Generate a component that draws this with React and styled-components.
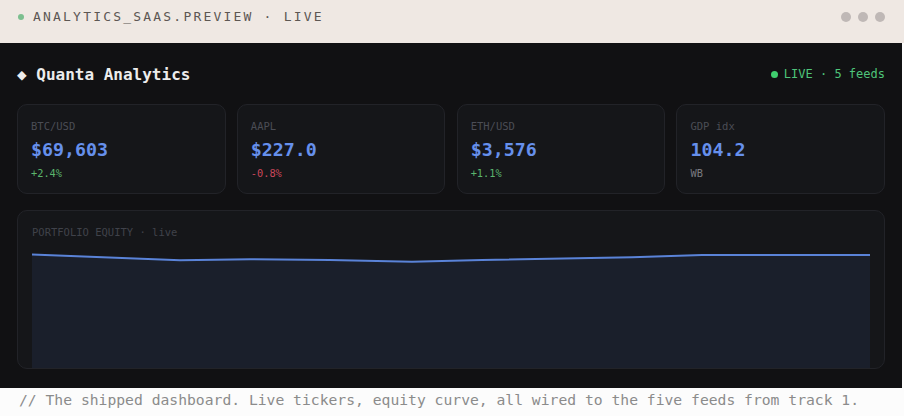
import React from "react";
import styled, { createGlobalStyle } from "styled-components";

const mono = `"DejaVu Sans Mono", "Liberation Mono", monospace`;

const Global = createGlobalStyle`
  html, body { margin: 0; padding: 0; background: #ffffff; }
  body { font-family: ${mono}; width: 904px; height: 416px; overflow: hidden; }
  * { box-sizing: border-box; }
`;

const Frame = styled.div`
  display: flex;
  flex-direction: column;
  width: 904px;
`;

const TitleBar = styled.div`
  display: flex;
  align-items: center;
  justify-content: space-between;
  height: 43px;
  padding: 0 19px 9px 18px;
  background: #efe8e3;
`;

const TitleLeft = styled.div`
  display: flex;
  align-items: center;
  gap: 9px;
`;

const Dot = styled.span`
  width: ${(p) => p.$size}px;
  height: ${(p) => p.$size}px;
  border-radius: 50%;
  background: ${(p) => p.$color};
  flex: none;
`;

const BarLabel = styled.span`
  font-size: 13px;
  letter-spacing: 2.2px;
  color: #5d5753;
  line-height: 18px;
`;

const WindowDots = styled.div`
  display: flex;
  gap: 6.5px;
`;

const Panel = styled.div`
  width: 902px;
  height: 345px;
  background: #111113;
  padding: 20px 17px 19px;
  display: flex;
  flex-direction: column;
`;

const Header = styled.div`
  display: flex;
  align-items: center;
  justify-content: space-between;
  height: 22px;
  margin-bottom: 19px;
`;

const Brand = styled.div`
  font-size: 16px;
  font-weight: 600;
  color: #ececec;
  white-space: pre;
`;

const LiveTag = styled.div`
  display: flex;
  align-items: center;
  gap: 6px;
  font-size: 12px;
  color: #4ec47a;
`;

const Tickers = styled.div`
  display: grid;
  grid-template-columns: repeat(4, 1fr);
  gap: 11.3px;
  margin-bottom: 16px;
`;

const Card = styled.div`
  background: #151619;
  border: 1px solid #222328;
  border-radius: 10px;
`;

const TickerCard = styled(Card)`
  height: 90px;
  padding: 15px 13px 14px;
  display: flex;
  flex-direction: column;
`;

const TickerLabel = styled.div`
  font-size: 10.5px;
  line-height: 12px;
  color: #4b4d55;
`;

const TickerValue = styled.div`
  font-size: 18.3px;
  font-weight: 700;
  line-height: 24px;
  margin-top: 6px;
  color: #6690ec;
`;

const TickerChange = styled.div`
  font-size: 10.3px;
  line-height: 12px;
  margin-top: 5px;
  color: ${(p) => p.$color};
`;

const ChartCard = styled(Card)`
  height: 159px;
  padding: 14px 14px 0;
  display: flex;
  flex-direction: column;
  overflow: hidden;
`;

const ChartLabel = styled.div`
  font-size: 10.5px;
  line-height: 14px;
  color: #40424a;
  margin-bottom: 14px;
`;

const ChartArea = styled.div`
  flex: 1;
  min-height: 0;
  svg { display: block; width: 100%; height: 100%; }
`;

const Caption = styled.div`
  height: 28px;
  padding: 0 19px;
  font-size: 14.7px;
  line-height: 24px;
  color: #8b8b8b;
  background: #fcfcfc;
  white-space: pre;
`;

const tickers = [
  { label: "BTC/USD", value: "$69,603", change: "+2.4%", color: "#5bb56d" },
  { label: "AAPL", value: "$227.0", change: "-0.8%", color: "#c9475a" },
  { label: "ETH/USD", value: "$3,576", change: "+1.1%", color: "#5bb56d" },
  { label: "GDP idx", value: "104.2", change: "WB", color: "#7a7b80" },
];

// equity curve samples (x, y) in chart units
const curve = [
  [0, 1.5], [148, 7.3], [218, 6.3], [298, 7], [380, 8.8],
  [450, 7], [600, 4.3], [670, 2], [838, 2],
];

function EquityChart() {
  const w = 838;
  const h = 116;
  const line = curve.map(([x, y]) => `${x},${y}`).join(" ");
  const area = `0,${h} ${line} ${w},${h}`;
  return (
    <svg viewBox={`0 0 ${w} ${h}`} preserveAspectRatio="none">
      <polygon points={area} fill="#1a1f2b" />
      <polyline points={line} fill="none" stroke="#5a83d8" strokeWidth="2" />
    </svg>
  );
}

export default function App() {
  return (
    <>
      <Global />
      <Frame>
        <TitleBar>
          <TitleLeft>
            <Dot $size={6} $color="#7cbf8f" />
            <BarLabel>ANALYTICS_SAAS.PREVIEW · LIVE</BarLabel>
          </TitleLeft>
          <WindowDots>
            <Dot $size={10.5} $color="#bfb8b6" />
            <Dot $size={10.5} $color="#bfb8b6" />
            <Dot $size={10.5} $color="#bfb8b6" />
          </WindowDots>
        </TitleBar>
        <Panel>
          <Header>
            <Brand>◆ Quanta Analytics</Brand>
            <LiveTag>
              <Dot $size={7} $color="#3fcf6e" />
              LIVE · 5 feeds
            </LiveTag>
          </Header>
          <Tickers>
            {tickers.map((t) => (
              <TickerCard key={t.label}>
                <TickerLabel>{t.label}</TickerLabel>
                <TickerValue>{t.value}</TickerValue>
                <TickerChange $color={t.color}>{t.change}</TickerChange>
              </TickerCard>
            ))}
          </Tickers>
          <ChartCard>
            <ChartLabel>PORTFOLIO EQUITY · live</ChartLabel>
            <ChartArea>
              <EquityChart />
            </ChartArea>
          </ChartCard>
        </Panel>
        <Caption>// The shipped dashboard. Live tickers, equity curve, all wired to the five feeds from track 1.</Caption>
      </Frame>
    </>
  );
}
